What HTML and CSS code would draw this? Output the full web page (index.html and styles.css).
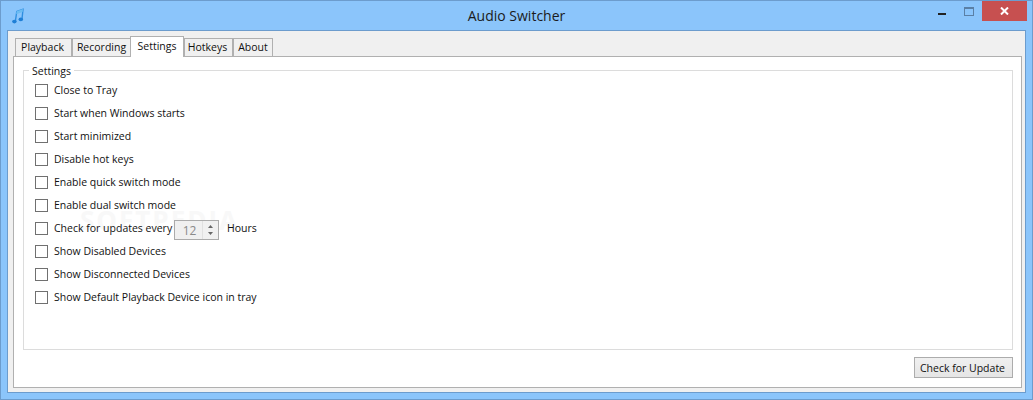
FILE: index.html
```html
<!DOCTYPE html>
<html lang="en">
<head>
<meta charset="utf-8">
<title>Audio Switcher</title>
<link rel="stylesheet" href="styles.css">
</head>
<body>
<div class="window">
  <header class="titlebar">
    <svg class="app-icon" width="12" height="16" viewBox="0 0 12 16">
      <path d="M3.4 13 L4.8 3.5 L11 1.2 L10 11" fill="none" stroke="#2f8fe0" stroke-width="1.4"/>
      <path d="M4.6 3.2 L11 1 L10.6 4 L4.2 6.2 Z" fill="#6bbcf2"/>
      <ellipse cx="2.4" cy="13.6" rx="2.3" ry="1.8" fill="#1f7fd6"/>
      <ellipse cx="8.8" cy="11.4" rx="2.3" ry="1.8" fill="#1f7fd6"/>
    </svg>
    <div class="title">Audio Switcher</div>
    <div class="controls">
      <span class="minimize"></span>
      <span class="maximize"></span>
      <span class="close">
        <svg width="9" height="8" viewBox="0 0 9 8"><path d="M1 0.5 L8 7.5 M8 0.5 L1 7.5" stroke="#fff" stroke-width="2"/></svg>
      </span>
    </div>
  </header>
  <div class="client">
    <nav class="tabs">
      <div class="tab playback">Playback</div>
      <div class="tab recording">Recording</div>
      <div class="tab active">Settings</div>
      <div class="tab hotkeys">Hotkeys</div>
      <div class="tab about">About</div>
    </nav>
    <main class="panel">
      <section class="group">
        <div class="legend">Settings</div>
        <div class="watermark">SOFTPEDIA</div>
        <label class="row"><span class="check"></span><span class="label">Close to Tray</span></label>
        <label class="row"><span class="check"></span><span class="label">Start when Windows starts</span></label>
        <label class="row"><span class="check"></span><span class="label">Start minimized</span></label>
        <label class="row"><span class="check"></span><span class="label">Disable hot keys</span></label>
        <label class="row"><span class="check"></span><span class="label">Enable quick switch mode</span></label>
        <label class="row"><span class="check"></span><span class="label">Enable dual switch mode</span></label>
        <label class="row">
          <span class="check"></span><span class="label updates-label">Check for updates every</span>
          <span class="spinner">
            <span class="spin-value">12</span>
            <span class="spin-buttons">
              <svg width="5" height="3" viewBox="0 0 5 3"><path d="M2.5 0 L5 3 H0 Z" fill="#666"/></svg>
              <svg width="5" height="3" viewBox="0 0 5 3"><path d="M0 0 H5 L2.5 3 Z" fill="#666"/></svg>
            </span>
          </span>
          <span class="label hours">Hours</span>
        </label>
        <label class="row"><span class="check"></span><span class="label">Show Disabled Devices</span></label>
        <label class="row"><span class="check"></span><span class="label">Show Disconnected Devices</span></label>
        <label class="row"><span class="check"></span><span class="label">Show Default Playback Device icon in tray</span></label>
      </section>
      <footer class="footer">
        <button class="update" type="button">Check for Update</button>
      </footer>
    </main>
  </div>
</div>
</body>
</html>
```

FILE: styles.css
```css
* { box-sizing: border-box; }
html, body { margin: 0; padding: 0; }
body {
  width: 1033px;
  height: 400px;
  overflow: hidden;
  font-family: "Open Sans", "Noto Sans", sans-serif;
  font-size: 10.5px;
  color: #111;
}
.window {
  width: 1033px;
  height: 400px;
  background: #8bc5fb;
  border: 1px solid #6c9ccd;
  display: flex;
  flex-direction: column;
  padding: 0 6px 6px 6px;
}
.titlebar {
  height: 29px;
  flex: none;
  position: relative;
  display: flex;
  align-items: flex-start;
}
.app-icon { position: absolute; left: 5px; top: 7px; }
.title {
  width: 100%;
  text-align: center;
  font-size: 14px;
  line-height: 29px;
  color: #1b1b1b;
}
.controls {
  position: absolute;
  right: -1px;
  top: 0;
  height: 20px;
  display: flex;
}
.minimize {
  position: absolute;
  right: 81px;
  top: 12px;
  width: 8px;
  height: 2px;
  background: #222;
}
.maximize {
  position: absolute;
  right: 53px;
  top: 6px;
  width: 10px;
  height: 9px;
  border: 1px solid #5a7fa5;
  border-top-width: 2px;
}
.close {
  width: 45px;
  height: 20px;
  background: #c75050;
  display: flex;
  align-items: center;
  justify-content: center;
}
.client {
  flex: 1;
  min-height: 0;
  background: #f0f0f0;
  border: 1px solid #6c9ccd;
  padding: 4px 3px 4px 5px;
  display: flex;
  flex-direction: column;
}
.tabs {
  height: 22px;
  flex: none;
  display: flex;
  align-items: flex-end;
  padding-left: 2px;
  margin-bottom: -1px;
  position: relative;
  z-index: 1;
}
.tab {
  height: 18px;
  line-height: 17px;
  background: #f0f0f0;
  border: 1px solid #b0b0b0;
  border-bottom: 0;
  margin-bottom: 1px;
  text-align: center;
  white-space: nowrap;
}
.playback { width: 57px; padding-right: 2px; }
.recording { width: 59px; }
.active {
  width: 54px;
  height: 21px;
  background: #fff;
  margin-bottom: 0;
  margin-left: -1px;
  line-height: 18px;
  position: relative;
}
.hotkeys { width: 49px; padding-right: 2px; }
.about { width: 40px; }
.panel {
  flex: 1;
  min-height: 0;
  background: #fff;
  border: 1px solid #b0b0b0;
  display: flex;
  flex-direction: column;
  padding: 13px 8px 7px 9px;
}
.group {
  position: relative;
  height: 280px;
  flex: none;
  border: 1px solid #dcdcdc;
  padding: 8px 0 0 11px;
}
.legend {
  position: absolute;
  left: 5px;
  top: -7px;
  padding: 0 3px;
  background: #fff;
  line-height: 14px;
}
.watermark {
  position: absolute;
  left: 56px;
  top: 136px;
  font-size: 26px;
  letter-spacing: 2px;
  font-weight: 700;
  color: #f8f8f8;
  line-height: 26px;
}
.row {
  position: relative;
  height: 23px;
  display: flex;
  align-items: center;
  white-space: nowrap;
}
.label { margin-bottom: 2px; }
.check {
  width: 13px;
  height: 13px;
  border: 1px solid #707070;
  background: #fff;
  margin-right: 6px;
  flex: none;
}
.updates-label { width: 120px; flex: none; }
.spinner {
  width: 45px;
  height: 20px;
  align-self: flex-start;
  margin-top: 3px;
  background: #f0f0f0;
  border: 1px solid #ababab;
  display: flex;
  align-items: center;
  color: #8a8a8a;
}
.spin-value { flex: 1; text-align: center; font-size: 12px; padding-left: 2px; }
.spin-buttons {
  width: 16px;
  height: 18px;
  display: flex;
  flex-direction: column;
  align-items: center;
  justify-content: center;
  gap: 4px;
  background: #f0f0f0;
  border-left: 1px solid #e0e0e0;
}
.spin-buttons svg { display: block; }
.hours { margin-left: 8px; }
.footer {
  flex: 1;
  display: flex;
  justify-content: flex-end;
  align-items: flex-start;
  padding-top: 7px;
}
.update {
  width: 99px;
  height: 21px;
  padding: 0 2px 0 0;
  font: inherit;
  color: inherit;
  background: linear-gradient(#f0f0f0, #e5e5e5);
  border: 1px solid #acacac;
}
```
